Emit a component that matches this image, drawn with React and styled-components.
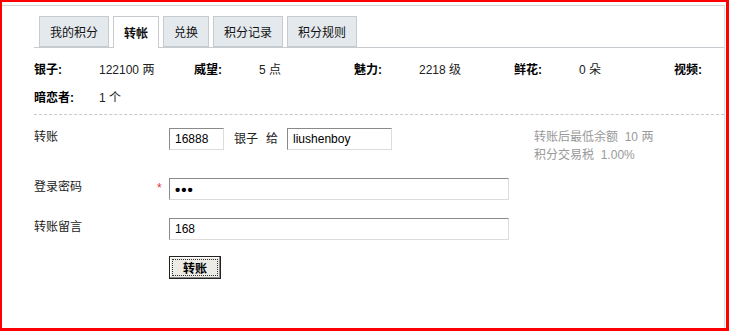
import React from 'react';
import styled, { createGlobalStyle } from 'styled-components';

const GlobalStyle = createGlobalStyle`
    html, body {
        margin: 0;
        padding: 0;
        background: #fff;
    }
    body {
        font-family: "Liberation Sans", "Noto Sans CJK SC", sans-serif;
        font-size: 12px;
        color: #000;
    }
`;

const tabs = ['我的积分', '转帐', '兑换', '积分记录', '积分规则'];

const stats = [
    ['银子:', '122100 两'],
    ['威望:', '5 点'],
    ['魅力:', '2218 级'],
    ['鲜花:', '0 朵'],
    ['视频:', ''],
    ['暗恋者:', '1 个'],
];

const App = () => {
    return (
        <>
            <GlobalStyle />
            <Frame>
                <Inner>
                    <TabBar>
                        {tabs.map((t, i) => (
                            <Tab key={t} $active={i === 1}>{t}</Tab>
                        ))}
                    </TabBar>
                    <Stats>
                        {stats.map(([label, value]) => (
                            <React.Fragment key={label}>
                                <StatLabel>{label}</StatLabel>
                                <StatValue>{value}</StatValue>
                            </React.Fragment>
                        ))}
                    </Stats>
                    <Divider />
                    <Form>
                        <Row $height={50}>
                            <Label>转账</Label>
                            <Field>
                                <Input $width={55} defaultValue="16888" readOnly />
                                <Unit>银子</Unit>
                                <Unit $gap={8}>给</Unit>
                                <Input $width={105} $gap={9} defaultValue="liushenboy" readOnly />
                                <Note>
                                    <div>转账后最低余额&nbsp; 10 两</div>
                                    <div>积分交易税&nbsp; 1.00%</div>
                                </Note>
                            </Field>
                        </Row>
                        <Row $height={40}>
                            <Label>登录密码<Required>*</Required></Label>
                            <Field>
                                <Input $width={340} $secret type="password" defaultValue="abc" readOnly />
                            </Field>
                        </Row>
                        <Row $height={38}>
                            <Label>转账留言</Label>
                            <Field>
                                <Input $width={340} defaultValue="168" readOnly />
                            </Field>
                        </Row>
                        <Row>
                            <Label />
                            <Field>
                                <SubmitButton type="button"><span>转账</span></SubmitButton>
                            </Field>
                        </Row>
                    </Form>
                </Inner>
            </Frame>
        </>
    );
}

export default App;

const Frame = styled.div`
    box-sizing: border-box;
    width: 729px;
    height: 331px;
    border-style: solid;
    border-color: #ff0000;
    border-width: 2px 3px 3px 2px;
    padding-top: 3px;
    overflow: hidden;
`;
const Inner = styled.div`
    box-sizing: border-box;
    height: 100%;
    margin-right: 1px;
    border-top: 1px solid #cfd3d6;
    border-right: 1px solid #dde0e2;
    padding: 10px 0 0 32px;
`;
const TabBar = styled.div`
    display: flex;
    gap: 4px;
    height: 31px;
    padding-left: 5px;
    border-bottom: 1px solid #c6cbd0;
`;
const Tab = styled.div`
    box-sizing: border-box;
    height: ${p => (p.$active ? '32px' : '31px')};
    padding: 0 10px;
    display: flex;
    align-items: center;
    border: 1px solid #c6cbd0;
    border-bottom: ${p => (p.$active ? 'none' : '1px solid #c6cbd0')};
    background: ${p => (p.$active ? '#fff' : '#e4e9ee')};
    font-weight: ${p => (p.$active ? 700 : 400)};
    color: #111;
`;
const Stats = styled.div`
    display: grid;
    grid-template-columns: repeat(5, 65px 95px);
    grid-auto-rows: 28px;
    padding-top: 6px;
    align-items: center;
`;
const StatLabel = styled.div`
    font-weight: 700;
    white-space: nowrap;
`;
const StatValue = styled.div`
    white-space: nowrap;
    color: #222;
`;
const Divider = styled.div`
    border-top: 1px dashed #c8c8c8;
    margin-top: 4px;
`;
const Form = styled.div`
    padding-top: 13px;
`;
const Row = styled.div`
    display: flex;
    align-items: flex-start;
    min-height: ${p => (p.$height ? `${p.$height}px` : 'auto')};
`;
const Label = styled.div`
    position: relative;
    width: 135px;
    flex-shrink: 0;
    margin-top: -1px;
    color: #222;
`;
const Required = styled.span`
    position: absolute;
    left: 123px;
    top: 4px;
    color: #e03030;
`;
const Field = styled.div`
    display: flex;
    align-items: flex-start;
`;
const Input = styled.input`
    box-sizing: border-box;
    width: ${p => p.$width}px;
    height: 22px;
    margin: 0 0 0 ${p => p.$gap || 0}px;
    padding: 0 5px;
    font: ${p => (p.$secret ? '700 15px' : '12px')} "Liberation Sans", "Noto Sans CJK SC", sans-serif;
    letter-spacing: ${p => (p.$secret ? '1px' : 'normal')};
    color: #000;
    background: #fff;
    border-style: solid;
    border-width: 1px;
    border-color: #8a8a8a #dcdcdc #dcdcdc #8a8a8a;
    outline: none;
`;
const Unit = styled.span`
    margin-left: ${p => p.$gap || 10}px;
    line-height: 22px;
    color: #222;
`;
const Note = styled.div`
    margin-left: 142px;
    line-height: 18px;
    color: #999;
`;
const SubmitButton = styled.button`
    box-sizing: border-box;
    width: 52px;
    height: 23px;
    padding: 2px;
    border: 1px solid #222;
    background: #ecebe6;
    box-shadow: inset -1px -1px 0 #888, inset 1px 1px 0 #fff;
    font: 700 12px "Noto Sans CJK SC", sans-serif;
    color: #000;
    cursor: pointer;
    span {
        display: block;
        height: 100%;
        box-sizing: border-box;
        border: 1px dotted #333;
        line-height: 15px;
    }
`;
